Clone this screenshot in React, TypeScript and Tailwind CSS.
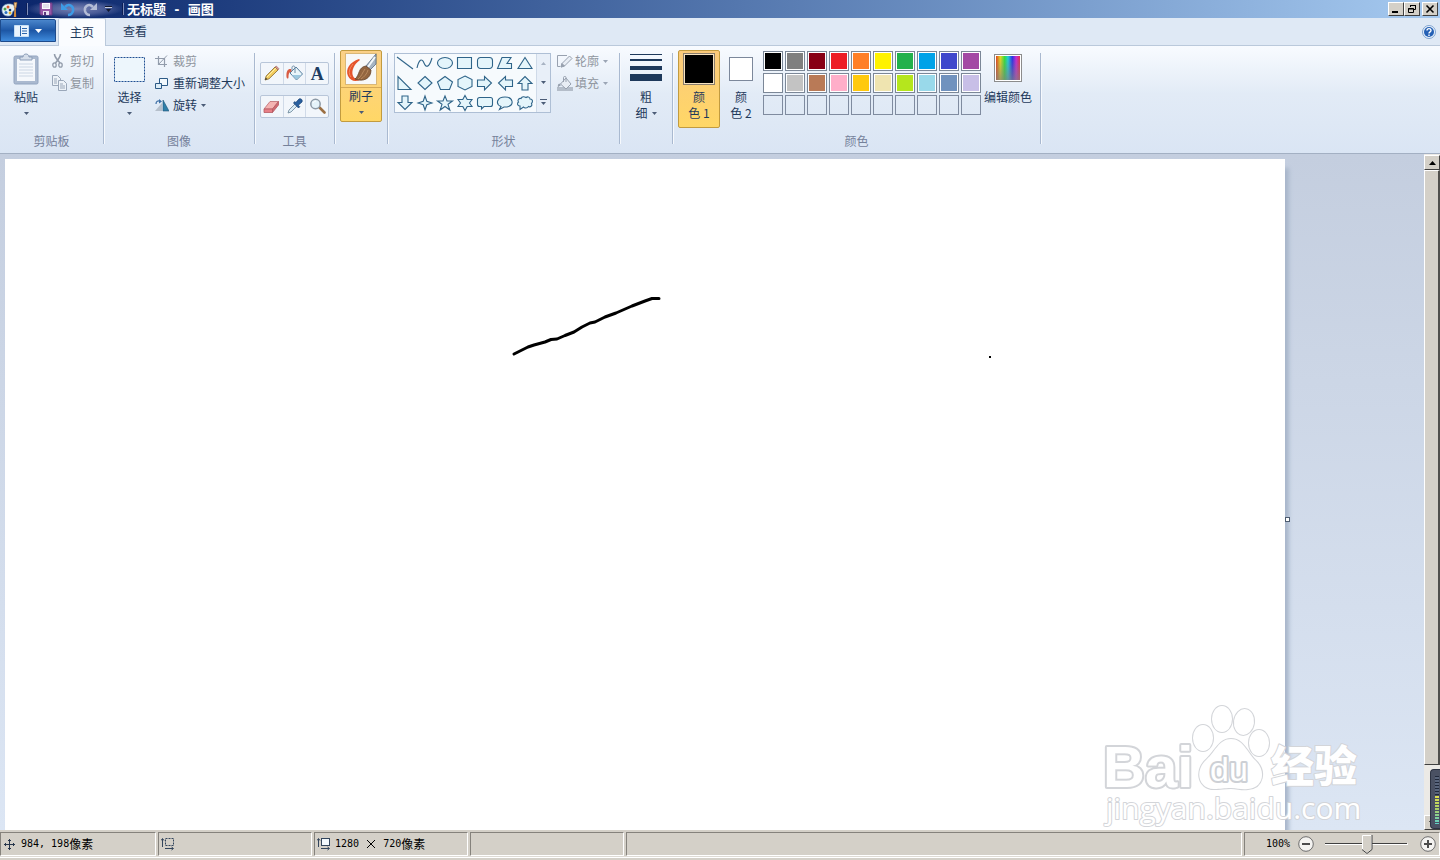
import React from "react";

type Kids = { children?: React.ReactNode };

function Caret({ className = "text-[#4b5c77]" }: { className?: string }) {
  return (
    <svg width="5" height="3" viewBox="0 0 5 3" className={className} aria-hidden="true">
      <path d="M0 0h5L2.500 3z" fill="currentColor" />
    </svg>
  );
}

function Group({ label, children, className }: Kids & { label?: string; className: string }) {
  return (
    <section className={`flex shrink-0 ${className}`}>
      <div className="flex min-w-0 flex-1 flex-col">
        <div className="flex h-[87px] items-start pt-1">{children}</div>
        <div className="text-center leading-4 text-[#75819a]">{label}</div>
      </div>
      <div className="mt-[7px] h-[91px] w-px bg-[#a9b9d0] shadow-[1px_0_0_#f6f9fd]" />
    </section>
  );
}

function RowButton({ icon, text, disabled, caret }: { icon: React.ReactNode; text: string; disabled?: boolean; caret?: boolean }) {
  return (
    <button disabled={disabled} className={`flex h-[22px] items-center whitespace-nowrap ${disabled ? "text-[#8f959e]" : "text-[#1e395b]"}`}>
      <span className="flex w-[18px] shrink-0 justify-start">{icon}</span>
      {text}
      {caret && (
        <span className="ml-1">
          <Caret className={disabled ? "text-[#9ba5b5]" : "text-[#4b5c77]"} />
        </span>
      )}
    </button>
  );
}

function Logo() {
  return (
    <svg width="17" height="17" viewBox="0 0 17 17" aria-hidden="true">
      <path d="M1 9C1 5 4 3 8 3s7 2 6 5c-.5 2-2 1.500-2.500 3S11 15 7 15 1 12 1 9z" fill="#e6f1f8" stroke="#86a9c6" strokeWidth=".7" />
      <circle cx="4" cy="8" r="1.500" fill="#4ea24b" />
      <circle cx="7" cy="6" r="1.500" fill="#d5572d" />
      <circle cx="5" cy="11.500" r="1.500" fill="#2b6fc2" />
      <circle cx="9" cy="12" r="1.400" fill="#e8b52c" />
      <circle cx="9" cy="9" r="1.300" fill="#173f73" />
      <path d="M13.500 6l-.7 10h2.400l-.5-10z" fill="#d18a3a" />
      <path d="M13 1.500h3L15 7h-1.600z" fill="#f0c487" stroke="#a86b2d" strokeWidth=".6" />
    </svg>
  );
}

function Clipboard() {
  return (
    <svg width="26" height="32" viewBox="0 0 26 32" aria-hidden="true">
      <rect x="1" y="3" width="24" height="28" rx="1.500" fill="#aab9cf" stroke="#93a5c0" />
      <rect x="4" y="6" width="18" height="22" fill="#f5f8fc" />
      <path d="M6 11h14M6 14h14M6 17h14M6 20h14M6 23h14" stroke="#cbd6e4" />
      <path d="M7 7V4h3c0-4 6-4 6 0h3v3z" fill="#d5deea" stroke="#8d9fb9" />
    </svg>
  );
}

const cutIcon = (
  <svg width="12" height="14" viewBox="0 0 12 14" fill="none" stroke="#929cab" aria-hidden="true">
    <path d="M2.500 0c0 3 2 5 5.500 9M8.500 0c0 3-2 5-5 9" strokeWidth="1.600" />
    <ellipse cx="2.500" cy="11" rx="1.700" ry="2.200" strokeWidth="1.300" />
    <ellipse cx="8.500" cy="11" rx="1.700" ry="2.200" strokeWidth="1.300" />
  </svg>
);
const copyIcon = (
  <svg width="15" height="16" viewBox="0 0 15 16" fill="#edf2f8" stroke="#9aa7b9" aria-hidden="true">
    <path d="M.5.5h5l3 3v7h-8z" />
    <path d="M2 4h3M2 6h3M2 8h3" />
    <path d="M6.500 5.500h5l3 3v7h-8z" />
    <path d="M8 9h3M8 11h5M8 13h5" />
  </svg>
);
const cropIcon = (
  <svg width="13" height="13" viewBox="0 0 13 13" fill="none" stroke="#929cab" aria-hidden="true">
    <path d="M3.500 1v8.500H12M0 3.500h9.500V12" strokeWidth="1.200" />
    <path d="M3 10L12 .5" />
  </svg>
);
const resizeIcon = (
  <svg width="14" height="13" viewBox="0 0 14 13" fill="#f2f8fc" stroke="#2d5a86" aria-hidden="true">
    <path d="M4.500 1.500h8v7h-8z" />
    <path d="M.5 6.500h6v5h-6z" fill="#dcecf6" />
  </svg>
);
const rotateIcon = (
  <svg width="14" height="13" viewBox="0 0 14 13" aria-hidden="true">
    <path d="M7 4v8H0z" fill="#b5bfcb" />
    <path d="M8 1v11h6z" fill="#2f7fa8" stroke="#1f5678" strokeWidth=".6" />
    <path d="M1 5c0-3 2-3.500 4-3" fill="none" stroke="#3c6ea5" strokeWidth="1.200" />
    <path d="M4 0l3 2.500L4 4.500z" fill="#3c6ea5" />
  </svg>
);
const outlineIcon = (
  <svg width="16" height="14" viewBox="0 0 16 14" fill="none" stroke="#98a1af" aria-hidden="true">
    <path d="M10 1.500H.5v11H3" />
    <path d="M4 13l1-3.500L12.500 2 15 4.500 7.500 12z" fill="#e9eef5" />
    <path d="M4 13l1-3.500L7.500 12z" fill="#98a1af" />
  </svg>
);
const fillIcon = (
  <svg width="16" height="15" viewBox="0 0 16 15" aria-hidden="true">
    <path d="M0 11h16v4H0z" fill="#b4bdc9" />
    <path d="M3.500 8L9 2l5 6-5 5z" fill="#e8edf4" stroke="#98a1af" />
    <path d="M9 6V1.500C9 0 6.500 0 6.500 1.500V6" fill="none" stroke="#98a1af" />
    <path d="M3.500 8C1 7 .5 9 1 12c1-2 1-2 2.500-2z" fill="#98a1af" />
  </svg>
);

const tools: { name: string; icon: React.ReactNode }[] = [
  {
    name: "铅笔",
    icon: (
      <>
        <path d="M2 15l1.200-4L12 2l3 3-9 8.800z" fill="#f3cd5f" stroke="#8d7034" strokeWidth=".9" />
        <path d="M4 12l9-9" stroke="#fff0a8" />
        <path d="M12 2l3 3 1-1.200L13.300 1z" fill="#d99a91" stroke="#9a625a" strokeWidth=".6" />
        <path d="M2 15l.8-2.300L4.300 14z" fill="#333" />
      </>
    ),
  },
  {
    name: "用颜色填充",
    icon: (
      <>
        <path d="M4 8l6-6 6.500 7-6 6z" fill="#e9f5fa" stroke="#557d9e" />
        <path d="M6 10h9l-4.500 4.500z" fill="#9cc8df" />
        <path d="M9 8V2.500C9 .5 6 .5 6 2.500V6" fill="none" stroke="#6f8ca4" />
        <path d="M5 4C2 3.500 0 6 .5 12c.5 2 2 2 2 0C2.500 9 3 7 5.500 6.500z" fill="#d85c43" />
      </>
    ),
  },
  { name: "文本", icon: null },
  {
    name: "橡皮擦",
    icon: (
      <>
        <path d="M1 11l6-7.500h8.500l-6 7.500z" fill="#f4b3b2" stroke="#bd6970" strokeWidth=".8" />
        <path d="M1 11h8.500v3.500H1z" fill="#e77f86" stroke="#b65b63" strokeWidth=".8" />
        <path d="M9.500 11l6-7.500V7l-6 7.500z" fill="#cf6971" stroke="#b65b63" strokeWidth=".8" />
      </>
    ),
  },
  {
    name: "颜色选取器",
    icon: (
      <>
        <path d="M2 15l1-3 6.500-6.500 2 2L5 14z" fill="#dcecf5" stroke="#6a8598" strokeWidth=".8" />
        <path d="M7.500 5l5 5 1.300-1.300-1.500-1.500L16 4c1-2-1.200-4-3-3L9.800 4.500 8.700 3.600z" fill="#285f9f" stroke="#153e70" strokeWidth=".7" />
      </>
    ),
  },
  {
    name: "放大镜",
    icon: (
      <>
        <path d="M10.500 9.500l5 5" stroke="#9b6f42" strokeWidth="2.600" strokeLinecap="round" />
        <circle cx="6.500" cy="6" r="4.700" fill="#e5f3fa" stroke="#8c99a6" strokeWidth="1.500" />
        <path d="M4 5c.5-1.500 2-2 3-1.800" fill="none" stroke="#fff" />
      </>
    ),
  },
];

function ToolButton({ index }: { index: number }) {
  const tool = tools[index];
  return (
    <button aria-label={tool.name} className="flex flex-1 items-center justify-center border-r border-[#d0dae8] last:border-r-0">
      {tool.icon ? (
        <svg width="17" height="17" viewBox="0 0 17 17" aria-hidden="true">{tool.icon}</svg>
      ) : (
        <span className="font-['Liberation_Serif',serif] text-[18px] font-bold leading-5 text-[#1d3d63]">A</span>
      )}
    </button>
  );
}

const shapes: [string, string][] = [
  ["直线", "M2 4L18 16"],
  ["曲线", "M2 15C4 6 7 5 9 10s5 5 8-5"],
  ["椭圆形", "M2.500 10a7.500 5.500 0 1 0 15 0a7.500 5.500 0 1 0-15 0z"],
  ["矩形", "M2.500 4.500h14v11h-14z"],
  ["圆角矩形", "M5.500 4.500h9a3 3 0 0 1 3 3v5a3 3 0 0 1-3 3h-9a3 3 0 0 1-3-3v-5a3 3 0 0 1 3-3z"],
  ["多边形", "M2.500 15.500L7 4.500h9l-4 6h4.500v5z"],
  ["三角形", "M10 4.500l7 11H3z"],
  ["直角三角形", "M3 3.500v13h13z"],
  ["菱形", "M10 3.500L17 10l-7 6.500L3 10z"],
  ["五边形", "M10 3.500l7.500 5.500-3 7.500h-9L2.500 9z"],
  ["六边形", "M10 3l7 3.500v7L10 17l-7-3.500v-7z"],
  ["右箭头", "M2.500 7v6.500h7V17l7-7-7-6.500V7z"],
  ["左箭头", "M17.500 7v6.500h-7V17l-7-7 7-6.500V7z"],
  ["向上箭头", "M7 17v-6.500H3l7-7 7 7h-4V17z"],
  ["向下箭头", "M7 3v6.500H3l7 7 7-7h-4V3z"],
  ["四角星形", "M10 3l1.800 5.200L17 10l-5.200 1.800L10 17l-1.800-5.200L3 10l5.200-1.800z"],
  ["五角星形", "M10 3l2 5h5.500L13 11.300l1.800 5.700L10 13.500 5.200 17 7 11.300 2.500 8H8z"],
  ["六角星形", "M10 2.500l2.200 4H17L14.500 10l2.500 3.500h-4.800L10 17.500l-2.200-4H3L5.500 10 3 6.500h4.800z"],
  ["圆角矩形标注", "M4.500 4.500h11a2 2 0 0 1 2 2v5a2 2 0 0 1-2 2H9L6.500 16v-2.500h-2a2 2 0 0 1-2-2v-5a2 2 0 0 1 2-2z"],
  ["椭圆形标注", "M6 13.500C0 11 2 4 10 4s10 8 2 10H9l-4.500 2.500z"],
  ["云形标注", "M5 13c-3 0-3-3-1.500-4C2 7 4 5 6 5.500 7 3 9.500 3.500 11 4.500c2-1.500 4 0 4 1.500 3 0 3 3 1.500 4.500C18 13 15 14.500 13.500 13.500c-1.500 2-4 2-5 .5L5 16.500z"],
];

function Shape({ index }: { index: number }) {
  const [name, d] = shapes[index];
  return (
    <button aria-label={name} className="h-5 w-5">
      <svg width="20" height="20" viewBox="0 0 20 20" aria-hidden="true">
        <path d={d} fill={index < 2 ? "none" : "#e4f5fb"} stroke="#2f6489" strokeWidth="1.100" />
      </svg>
    </button>
  );
}

function BrushIcon() {
  return (
    <svg width="32" height="32" viewBox="0 0 32 32" aria-hidden="true">
      <rect x=".5" y=".5" width="31" height="31" fill="#f7f8f8" stroke="#d9b777" />
      <path d="M14 6C5 9 0 16 3 23c3 6 9 6 14 3-3 1-8 0-9-3-2-5 1-12 7-16z" fill="#e5532b" />
      <path d="M8 11c-4 5-5 9-2 13" stroke="#f28b5f" fill="none" />
      <path d="M31 1L21 13l4 4 6-6z" fill="#a6b4c2" stroke="#566a80" strokeWidth=".8" />
      <path d="M30 4l-7 10" stroke="#f3f8fb" strokeWidth="2" />
      <path d="M21 13c-8 1-6 9-11 13 8 3 16 0 16-9z" fill="#93653f" stroke="#65442c" strokeWidth=".8" />
      <path d="M20 16c-3 4-3 7-7 10M23 17c-1 4-4 7-7 9" stroke="#ba8a5e" fill="none" />
    </svg>
  );
}

const palette: [string, string][] = [
  ["黑色", "bg-[#000000]"], ["灰色-50%", "bg-[#7f7f7f]"], ["深红色", "bg-[#880015]"], ["红色", "bg-[#ed1c24]"], ["橙色", "bg-[#ff7f27]"],
  ["黄色", "bg-[#fff200]"], ["绿色", "bg-[#22b14c]"], ["青绿", "bg-[#00a2e8]"], ["靛蓝", "bg-[#3f48cc]"], ["紫色", "bg-[#a349a4]"],
  ["白色", "bg-[#ffffff]"], ["灰色-25%", "bg-[#c3c3c3]"], ["褐色", "bg-[#b97a57]"], ["玫瑰色", "bg-[#ffaec9]"], ["金色", "bg-[#ffc90e]"],
  ["浅黄色", "bg-[#efe4b0]"], ["酸橙色", "bg-[#b5e61d]"], ["淡青绿色", "bg-[#99d9ea]"], ["蓝灰色", "bg-[#7092be]"], ["淡紫色", "bg-[#c8bfe7]"],
];

function Ribbon() {
  return (
    <div className="flex h-[108px] shrink-0 overflow-hidden border-b border-[#a3b0c3] bg-linear-to-b from-[#f8fbff] via-[#e2ebf6] via-45% to-[#dae5f4] text-[12px] leading-4 text-[#1e395b]">
      <Group label="剪贴板" className="w-[104px]">
        <button className="flex w-[52px] flex-col items-center pt-[3px]">
          <Clipboard />
          <span className="mt-1">粘贴</span>
          <span className="mt-[7px]"><Caret /></span>
        </button>
        <div className="flex flex-col">
          <RowButton disabled icon={cutIcon} text="剪切" />
          <RowButton disabled icon={copyIcon} text="复制" />
        </div>
      </Group>

      <Group label="图像" className="w-[151px]">
        <button className="flex w-[51px] flex-col items-center pt-[7px]">
          <svg width="31" height="25" viewBox="0 0 31 25" aria-hidden="true">
            <rect x=".5" y=".5" width="30" height="24" fill="#edf6fc" stroke="#1f4f92" strokeDasharray="2 1" />
          </svg>
          <span className="mt-[7px]">选择</span>
          <span className="mt-[7px]"><Caret /></span>
        </button>
        <div className="flex flex-col">
          <RowButton disabled icon={cropIcon} text="裁剪" />
          <RowButton icon={resizeIcon} text="重新调整大小" />
          <RowButton icon={rotateIcon} text="旋转" caret />
        </div>
      </Group>

      <Group label="工具" className="w-20">
        <div className="ml-[5px] flex w-[69px] flex-col gap-2.5 pt-3">
          <div className="flex h-[23px] rounded-xs border border-[#b8c6d9] bg-[#f2f6fb]">
            <ToolButton index={0} />
            <ToolButton index={1} />
            <ToolButton index={2} />
          </div>
          <div className="flex h-[23px] rounded-xs border border-[#b8c6d9] bg-[#f2f6fb]">
            <ToolButton index={3} />
            <ToolButton index={4} />
            <ToolButton index={5} />
          </div>
        </div>
      </Group>

      <Group className="w-[53px]">
        <button aria-pressed="true" className="ml-[5px] flex h-[72px] w-[42px] flex-col items-center rounded-xs border border-[#c29b3f] bg-linear-to-b from-[#fbd087] to-[#ffd766] pt-[2px]">
          <BrushIcon />
          <span className="mt-[2px] w-full border-t border-[#d5a955]">刷子</span>
          <span className="mt-[7px]"><Caret /></span>
        </button>
      </Group>

      <Group label="形状" className="w-[232px]">
        <div className="ml-[6px] mt-[3px] flex h-[60px] border border-[#aebfd5] bg-[#f6fafd]">
          <div className="-mt-px grid grid-cols-7">
            {shapes.map(([name], i) => (
              <Shape key={name} index={i} />
            ))}
          </div>
          <div className="ml-px flex w-3.5 flex-col border-l border-[#cfdae8] bg-[#e8eff8]">
            <button aria-label="向上滚动" className="flex flex-1 items-center justify-center">
              <span className="rotate-180"><Caret className="block text-[#a8b3c3]" /></span>
            </button>
            <button aria-label="向下滚动" className="flex flex-1 items-center justify-center">
              <Caret />
            </button>
            <button aria-label="更多形状" className="flex flex-1 flex-col items-center justify-center gap-[2px]">
              <span className="h-px w-[7px] bg-[#4b5c77]" />
              <Caret />
            </button>
          </div>
        </div>
        <div className="ml-1.5 flex flex-col">
          <RowButton disabled icon={outlineIcon} text="轮廓" caret />
          <RowButton disabled icon={fillIcon} text="填充" caret />
        </div>
      </Group>

      <Group className="w-[53px]">
        <button className="flex w-full flex-col items-center pt-1">
          <span className="flex w-8 flex-col" aria-hidden="true">
            <span className="h-px bg-[#1e395b]" />
            <span className="mt-1 h-[2px] bg-[#1e395b]" />
            <span className="mt-[5px] h-1 bg-[#1e395b]" />
            <span className="mt-1 h-[7px] bg-[#1e395b]" />
          </span>
          <span className="mt-2">粗</span>
          <span className="flex items-center gap-1">细<Caret /></span>
        </button>
      </Group>

      <Group label="颜色" className="w-[368px]">
        <button aria-pressed="true" className="ml-[5px] flex h-[78px] w-[42px] flex-col items-center rounded-xs border border-[#c29b3f] bg-linear-to-b from-[#fbca7b] to-[#ffd766] pt-[2px]">
          <span className="h-8 w-8 border border-[#8a7d6c] bg-black shadow-[inset_0_0_0_1px_#f7e3c0]" />
          <span className="mt-1">颜</span>
          <span>色 1</span>
        </button>
        <button className="flex h-[78px] w-[42px] flex-col items-center pt-[7px]">
          <span className="h-6 w-6 border border-[#7c889b] bg-white" />
          <span className="mt-2">颜</span>
          <span>色 2</span>
        </button>
        <div className="ml-px mt-px grid grid-cols-10 gap-[2px]">
          {palette.map(([name, bg]) => (
            <button key={name} aria-label={name} className={`h-5 w-5 border border-[#7b8797] shadow-[inset_0_0_0_1px_#fff] ${bg}`} />
          ))}
          {Array.from({ length: 10 }, (_, i) => (
            <button key={i} aria-label={`自定义颜色 ${i + 1}`} className="h-5 w-5 border border-[#7f8b9f]" />
          ))}
        </div>
        <button className="flex w-[54px] flex-col items-center pt-1">
          <span className="h-7 w-7 border border-[#8c8c8c] bg-white p-px">
            <span className="block h-full w-full bg-[linear-gradient(to_top,#808080b3,transparent),linear-gradient(to_right,#e3401c,#e8d820_18%,#2fe03b_36%,#1ed1dc_50%,#2a30e8_68%,#c828d6_84%,#e92c42)]" />
          </span>
          <span className="mt-[7px] whitespace-nowrap">编辑颜色</span>
        </button>
      </Group>
    </div>
  );
}

function WindowButton({ label, children }: Kids & { label: string }) {
  return (
    <button aria-label={label} className="flex h-3.5 w-4 items-center justify-center border border-t-white border-l-white border-r-[#404040] border-b-[#404040] bg-[#d4d0c8] text-black">
      <svg width="10" height="10" viewBox="0 0 10 10" fill="none" stroke="currentColor" aria-hidden="true">{children}</svg>
    </button>
  );
}

function TitleBar() {
  return (
    <header className="flex h-[18px] shrink-0 items-center bg-linear-to-r from-[#0a246a] to-[#a6caf0] pr-[2px]">
      <div className="flex w-[26px] pl-px"><Logo /></div>
      <div className="flex h-full items-center bg-[radial-gradient(closest-side,#a3a6cfb3,#7f88bb80_60%,transparent)]">
        <div className="h-3 w-[2px] border-l border-[#0b1d55] bg-[#7d8cb8]" />
        <div className="ml-2.5 flex items-center gap-1.5">
          <button aria-label="保存">
            <svg width="16" height="16" viewBox="0 0 16 16" aria-hidden="true" className="block">
              <path d="M2 2h12v12H3l-1-1z" fill="#9656a5" stroke="#693a83" />
              <path d="M4 2h8v6H4z" fill="#fbfaff" />
              <path d="M5 4h6M5 6h6" stroke="#c8c5d8" />
              <path d="M5 10h6v4H5z" fill="#e7deef" />
              <path d="M6 11h2v3H6z" fill="#5c377b" />
            </svg>
          </button>
          <button aria-label="撤消">
            <svg width="16" height="16" viewBox="0 0 16 16" aria-hidden="true" className="block">
              <path d="M5 6c4-4 9-1 8 4-.5 2-2 4-5 4" fill="none" stroke="#3d9be6" strokeWidth="2.500" />
              <path d="M1 2v7h7z" fill="#3d9be6" />
            </svg>
          </button>
          <button aria-label="重做">
            <svg width="16" height="16" viewBox="0 0 16 16" aria-hidden="true" className="block">
              <path d="M11 6C7 2 2 5 3 10c.5 2 2 4 5 4" fill="none" stroke="#b3bcd6" strokeWidth="2.500" />
              <path d="M15 2v7H8z" fill="#b3bcd6" />
            </svg>
          </button>
          <button aria-label="自定义快速访问工具栏" className="flex w-2 flex-col items-center gap-[2px]">
            <span className="h-px w-[7px] bg-[#10182e] shadow-[0_1px_0_#ffffffb3]" />
            <Caret className="text-[#10182e]" />
          </button>
        </div>
        <div className="ml-2.5 h-3 w-[2px] border-l border-[#0b1d55] bg-[#7d8cb8]" />
      </div>
      <h1 className="ml-[3px] flex-1 whitespace-pre text-[13px] font-bold leading-4 text-white">
        无标题<span className="font-['DejaVu_Sans_Mono',monospace] text-[12px]"> - </span>画图
      </h1>
      <div className="flex">
        <WindowButton label="最小化"><path d="M1 8h6" strokeWidth="2" /></WindowButton>
        <WindowButton label="还原">
          <path d="M3.500 3V1.500h5v4H7M3 1.500h6" />
          <path d="M1.500 4.500h5v4h-5zM1 5h6" />
        </WindowButton>
        <span className="ml-[2px] flex">
          <WindowButton label="关闭"><path d="M1.500 1.500l7 7M8.500 1.500l-7 7" strokeWidth="1.600" /></WindowButton>
        </span>
      </div>
    </header>
  );
}

function TabBar() {
  return (
    <nav className="flex h-7 shrink-0 items-end border-b border-[#bac9db] bg-[#dfe9f5] text-[12px] leading-4 text-[#1e395b]">
      <button aria-label="画图" className="mb-[3px] flex h-[23px] w-14 items-center justify-center gap-1.5 rounded-tr-xs border border-[#1d4b8c] bg-linear-to-b from-[#4a86cb] via-[#1d57a6] via-50% to-[#3f8bdc]">
        <svg width="15" height="12" viewBox="0 0 15 12" aria-hidden="true">
          <path d="M.5.500h14v11H.5z" fill="#eaf4fd" stroke="#c5def5" />
          <path d="M6.500 1v10M8 3.500h5M8 6h5M8 8.500h5" stroke="#2c66ad" />
        </svg>
        <svg width="7" height="4" viewBox="0 0 7 4" aria-hidden="true"><path d="M0 0h7L3.500 4z" fill="#fff" /></svg>
      </button>
      <div role="tablist" className="flex">
        <button role="tab" aria-selected="true" className="-mb-px ml-[2px] h-7 w-12 rounded-t-xs border border-b-0 border-[#bac9db] bg-[#fafcff] pb-px">主页</button>
        <button role="tab" aria-selected="false" className="ml-1 h-[27px] w-[50px] pb-px">查看</button>
      </div>
      <button aria-label="帮助" className="mb-1.5 ml-auto mr-1">
        <svg width="14" height="14" viewBox="0 0 14 14" aria-hidden="true" className="block">
          <circle cx="7" cy="7" r="6.500" fill="#e9f2fb" stroke="#7fa2cf" />
          <circle cx="7" cy="7" r="5" fill="#2460b5" />
          <path d="M5 5.500c0-2.500 4-2.500 4 0C9 7 7 6.800 7 8.500M7 9.500V11" stroke="#fff" strokeWidth="1.400" fill="none" />
        </svg>
      </button>
    </nav>
  );
}

function Watermark() {
  return (
    <svg width="270" height="126" viewBox="0 0 270 126" className="pointer-events-none absolute bottom-0 right-[57px]" role="img" aria-label="Baidu 经验">
      <g fill="#fff" stroke="#d3d5d9" strokeWidth="2" paintOrder="stroke" strokeLinejoin="round">
        <text x="6" y="83" fontSize="58" fontWeight="700" fontFamily="Liberation Sans, sans-serif" strokeWidth="4">Bai</text>
        <ellipse cx="106" cy="34" rx="10" ry="13" />
        <ellipse cx="125" cy="15" rx="10" ry="13" />
        <ellipse cx="147" cy="18" rx="10" ry="13" transform="rotate(8 147 18)" />
        <ellipse cx="162" cy="39" rx="10" ry="13" />
        <path d="M134 35c-12 0-16 13-24 20-13 11-9 30 7 30 7 0 10-1 17-1s10 2 17 1c15-1 19-18 7-29-8-8-12-21-24-21z" />
        <text x="113" y="77" fontSize="34" fontFamily="Liberation Sans, sans-serif" stroke="#cdd0d5" strokeWidth="4">du</text>
        <text x="174" y="78" fontSize="43" fontWeight="900" fontFamily="Noto Sans CJK SC, sans-serif">经验</text>
        <text x="9" y="115" fontSize="30" fontFamily="Open Sans, sans-serif">jingyan.baidu.com</text>
      </g>
    </svg>
  );
}

function Workspace() {
  return (
    <main className="flex min-h-0 flex-1 bg-linear-to-b from-[#c4cedf] to-[#dce6f4]">
      <div className="relative min-w-0 flex-1 overflow-hidden pl-[5px] pt-[5px]">
        <div className="flex w-max items-center">
          <svg width="1280" height="720" viewBox="0 0 1280 720" role="img" aria-label="画布" className="shrink-0 bg-white shadow-[4px_9px_4px_#a9b7cb]">
            <path
              d="M509 195L523 188L529 186L540 183L546 180.500L552 180L560 176.500L569 173L577 168L585 164L590 163L600 158L611 154L627 147L640 142L647 139.500L654 139.500"
              fill="none"
              stroke="#000"
              strokeWidth="3"
              strokeLinecap="round"
              strokeLinejoin="round"
            />
            <rect x="984" y="197" width="2" height="2" />
          </svg>
          <span className="h-[5px] w-[5px] border border-[#4d5c70] bg-white" />
        </div>
        <Watermark />
      </div>
      <div className="relative flex w-4 shrink-0 flex-col bg-[#eceae6] pt-px">
        <button aria-label="向上滚动" className="flex h-[15px] items-center justify-center border border-t-white border-l-white border-r-[#404040] border-b-[#404040] bg-[#d4d0c8]">
          <svg width="7" height="4" viewBox="0 0 7 4" aria-hidden="true"><path d="M0 4h7L3.500 0z" /></svg>
        </button>
        <div className="flex-[597] border border-t-white border-l-white border-r-2 border-r-[#504f4c] border-b-[#404040] bg-[#d4d0c8]" />
        <div className="flex-[50]" />
        <button aria-label="向下滚动" className="flex h-[15px] items-center justify-center border border-t-white border-l-white border-r-[#404040] border-b-[#404040] bg-[#d4d0c8]">
          <svg width="7" height="4" viewBox="0 0 7 4" aria-hidden="true"><path d="M0 0h7L3.500 4z" /></svg>
        </button>
        <div className="absolute bottom-px right-0 flex h-[60px] w-2.5 flex-col items-end rounded-l-sm border border-r-0 border-[#2d3342] bg-[#4a5163] pb-1 pr-px pt-1.5">
          <span className="w-1 flex-[4] bg-[repeating-linear-gradient(to_bottom,#20283a_0_1px,#59657c_1px_3px)]" />
          <span className="w-1 flex-[6] bg-[repeating-linear-gradient(to_bottom,#4a5163_0_1px,transparent_1px_3px),linear-gradient(to_bottom,#e4e04c,#a8d06a,#5fd0c8)]" />
        </div>
      </div>
    </main>
  );
}

function StatusPanel({ className, children }: Kids & { className: string }) {
  return (
    <div className={`flex h-6 items-center border border-t-[#85827c] border-l-[#85827c] border-r-white border-b-white ${className}`}>
      {children}
    </div>
  );
}

function Mono({ children }: Kids) {
  return <span className="whitespace-pre font-['DejaVu_Sans_Mono',monospace] text-[10px]">{children}</span>;
}

function SizeIcon({ dashed }: { dashed?: boolean }) {
  return (
    <svg width="14" height="14" viewBox="0 0 14 14" fill="none" stroke="#33455c" aria-hidden="true">
      <rect x="4.500" y="1.500" width="8" height="7" fill={dashed ? "none" : "#f2f8fc"} strokeDasharray={dashed ? "2 1" : undefined} />
      <path d="M1.500 2v8M0 3.500L1.500 1.500 3 3.500M4 11.500h8M10.500 10l2 1.500-2 1.500" />
    </svg>
  );
}

function StatusBar() {
  return (
    <footer className="flex h-[30px] shrink-0 flex-col bg-[#d4d0c8] pt-[2px] text-[12px] leading-4 text-black">
      <div className="flex gap-[2px] border-b border-[#dedbd5]">
        <StatusPanel className="w-[156px] gap-1.5 pl-[3px]">
          <svg width="11" height="11" viewBox="0 0 11 11" stroke="#26364c" fill="none" aria-hidden="true">
            <path d="M5.500 0v11M0 5.500h11M4 2l1.500-1.500L7 2M4 9l1.500 1.500L7 9M2 4L.5 5.500 2 7M9 4l1.500 1.500L9 7" />
          </svg>
          <span className="flex items-center"><Mono>984, 198</Mono>像素</span>
        </StatusPanel>
        <StatusPanel className="w-[154px] pl-[2px]"><SizeIcon dashed /></StatusPanel>
        <StatusPanel className="w-[154px] gap-1 pl-[2px]">
          <SizeIcon />
          <span className="flex items-center">
            <Mono>1280 </Mono>
            <svg width="12" height="12" viewBox="0 0 12 12" stroke="#000" role="img" aria-label="×"><path d="M2 2l8 8M10 2l-8 8" /></svg>
            <Mono> 720</Mono>像素
          </span>
        </StatusPanel>
        <StatusPanel className="w-[154px]" />
        <StatusPanel className="flex-1" />
        <StatusPanel className="w-[196px] pl-[21px]">
          <Mono>100%</Mono>
          <button aria-label="缩小" className="ml-2">
            <svg width="16" height="16" viewBox="0 0 16 16" className="block" aria-hidden="true">
              <circle cx="8" cy="8" r="7.300" fill="#f4f3f1" stroke="#6e6e6e" />
              <path d="M4 8h8" stroke="#4c4c4c" strokeWidth="2" />
            </svg>
          </button>
          <label className="relative ml-2.5 flex h-5 w-[84px] items-center">
            <svg width="84" height="20" viewBox="0 0 84 20" aria-hidden="true">
              <path d="M1 9.500h82" stroke="#404040" />
              <path d="M1 10.500h83v-2" stroke="#fff" fill="none" />
              <path d="M38.500 1.500h9v14L43 19.500l-4.500-4z" fill="#d4d0c8" stroke="#fff" />
              <path d="M38 15.500l5 4 5-4V1" fill="none" stroke="#404040" />
            </svg>
            <input type="range" aria-label="缩放" min="0" max="100" defaultValue="50" className="absolute inset-0 w-full opacity-0" />
          </label>
          <button aria-label="放大" className="ml-3">
            <svg width="16" height="16" viewBox="0 0 16 16" className="block" aria-hidden="true">
              <circle cx="8" cy="8" r="7.300" fill="#f4f3f1" stroke="#6e6e6e" />
              <path d="M4 8h8M8 4v8" stroke="#4c4c4c" strokeWidth="2" />
            </svg>
          </button>
        </StatusPanel>
      </div>
      <div className="h-px bg-white" />
    </footer>
  );
}

export default function App() {
  return (
    <div className="flex h-screen flex-col overflow-hidden font-['Noto_Sans_CJK_SC',sans-serif] select-none">
      <TitleBar />
      <TabBar />
      <Ribbon />
      <Workspace />
      <StatusBar />
    </div>
  );
}
